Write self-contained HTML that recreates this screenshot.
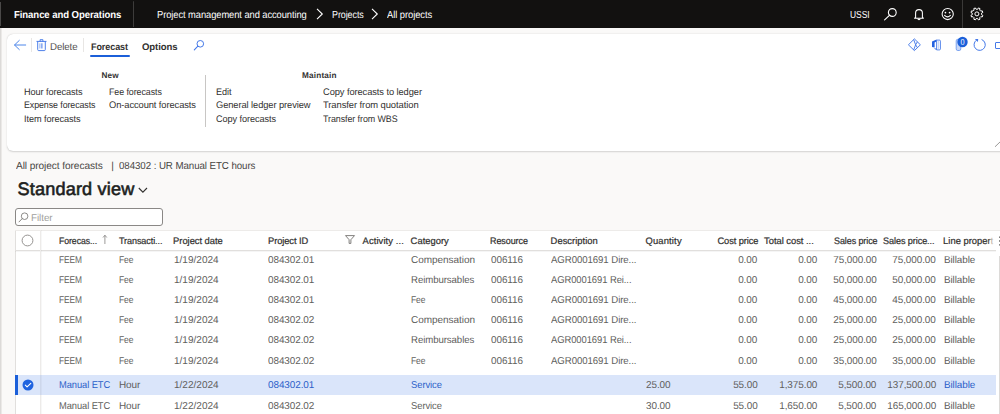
<!DOCTYPE html>
<html><head><meta charset="utf-8">
<style>
*{margin:0;padding:0;box-sizing:border-box}
html,body{width:1000px;height:414px;overflow:hidden;background:#faf9f8;font-family:"Liberation Sans",sans-serif;color:#323130;position:relative}
.a{position:absolute;white-space:nowrap;text-rendering:geometricPrecision}
svg.a{overflow:visible}
</style></head><body>
<div class="a" style="left:0px;top:0px;width:1000px;height:28px;background:#121110"></div>
<div class="a" style="left:0px;top:2px;width:1px;height:24px;background:#4a4948"></div>
<div class="a" style="font-size:10.2px;line-height:16px;top:8px;color:#fff;font-weight:bold;letter-spacing:-0.080px;left:13.70px;transform:scaleX(0.9389);transform-origin:0 0;">Finance and Operations</div>
<div class="a" style="left:133px;top:1px;width:1px;height:25.5px;background:#3d3c3b;border-radius:1px"></div>
<div class="a" style="font-size:10.2px;line-height:16px;top:8px;color:#fff;letter-spacing:-0.080px;left:157.00px;transform:scaleX(0.9169);transform-origin:0 0;">Project management and accounting</div>
<div class="a" style="font-size:10.2px;line-height:16px;top:8px;color:#fff;letter-spacing:-0.080px;left:331.50px;transform:scaleX(0.8770);transform-origin:0 0;">Projects</div>
<div class="a" style="font-size:10.2px;line-height:16px;top:8px;color:#fff;letter-spacing:-0.080px;left:387.00px;transform:scaleX(0.9245);transform-origin:0 0;">All projects</div>
<svg class="a" style="left:315.6px;top:8px" width="8" height="12" viewBox="0 0 8 12"><path d="M1 0.8 L6.3 6 L1 11.2" fill="none" stroke="#fff" stroke-width="1.1"/></svg>
<svg class="a" style="left:371.3px;top:8px" width="8" height="12" viewBox="0 0 8 12"><path d="M1 0.8 L6.3 6 L1 11.2" fill="none" stroke="#fff" stroke-width="1.1"/></svg>
<div class="a" style="font-size:10.2px;line-height:16px;top:8px;color:#fff;letter-spacing:-0.080px;left:850.00px;transform:scaleX(0.8313);transform-origin:0 0;">USSI</div>
<svg class="a" style="left:882px;top:6px" width="16" height="16" viewBox="0 0 16 16"><circle cx="10.3" cy="6.5" r="3.9" fill="none" stroke="#fff" stroke-width="1.1"/><path d="M7.4 9.3 L2.6 13.9" stroke="#fff" stroke-width="1.1" stroke-linecap="round"/></svg>
<svg class="a" style="left:912px;top:7px" width="14" height="15" viewBox="0 0 14 15"><path d="M3.6 10.4 V6 a3.4 3.4 0 0 1 6.8 0 V10.4 L11.4 11.2 H2.6 Z" fill="none" stroke="#fff" stroke-width="1.05" stroke-linejoin="round"/><path d="M5.8 11.8 a1.3 1.3 0 0 0 2.4 0" fill="none" stroke="#fff" stroke-width="1.05"/></svg>
<svg class="a" style="left:940px;top:7px" width="15" height="15" viewBox="0 0 15 15"><circle cx="7.7" cy="7" r="5.6" fill="none" stroke="#fff" stroke-width="1.05"/><circle cx="5.4" cy="5.6" r="0.85" fill="#fff"/><circle cx="9.6" cy="5.6" r="0.85" fill="#fff"/><path d="M4.6 8.4 Q7.5 11.2 10.4 8.4" fill="none" stroke="#fff" stroke-width="1.1" stroke-linecap="round"/></svg>
<div class="a" style="left:962px;top:0px;width:1px;height:28px;background:#3a3938"></div>
<svg class="a" style="left:969px;top:6.4px" width="16" height="16" viewBox="0 0 16 16"><path d="M12.58 8.68 L13.85 9.44 L13.20 11.02 L11.77 10.66 L10.66 11.77 L11.02 13.20 L9.44 13.85 L8.68 12.58 L7.12 12.58 L6.36 13.85 L4.78 13.20 L5.14 11.77 L4.03 10.66 L2.60 11.02 L1.95 9.44 L3.22 8.68 L3.22 7.12 L1.95 6.36 L2.60 4.78 L4.03 5.14 L5.14 4.03 L4.78 2.60 L6.36 1.95 L7.12 3.22 L8.68 3.22 L9.44 1.95 L11.02 2.60 L10.66 4.03 L11.77 5.14 L13.20 4.78 L13.85 6.36 L12.58 7.12 Z" fill="none" stroke="#fff" stroke-width="1" stroke-linejoin="round"/><circle cx="7.9" cy="7.9" r="2" fill="none" stroke="#fff" stroke-width="1"/></svg>
<div class="a" style="left:7px;top:33.5px;width:1010px;height:117.5px;background:#fff;border-radius:6px;box-shadow:0 0.6px 1.8px rgba(0,0,0,.16),0 0 0.5px rgba(0,0,0,.12)"></div>
<svg class="a" style="left:13px;top:39px" width="14" height="12" viewBox="0 0 14 12"><path d="M12.7 6 H1.7 M6.3 1.4 L1.5 6 L6.3 10.6" fill="none" stroke="#4d86ea" stroke-width="1" stroke-linecap="round" stroke-linejoin="round"/></svg>
<div class="a" style="left:31px;top:38px;width:1px;height:14px;background:#e8e6e4"></div>
<svg class="a" style="left:36px;top:38px" width="11" height="14" viewBox="0 0 11 14"><path d="M0.9 3.4 H10.1 M4.1 3.4 V1.7 H6.9 V3.4" fill="none" stroke="#4579e8" stroke-width="0.95" stroke-linecap="round"/><path d="M1.7 3.4 V11.6 Q1.7 12.6 2.7 12.6 H8.3 Q9.3 12.6 9.3 11.6 V3.4" fill="none" stroke="#4579e8" stroke-width="0.95"/><path d="M3.9 5.3 V10.5" stroke="#8fb0f0" stroke-width="1"/><path d="M5.9 5.3 V10.5" stroke="#4579e8" stroke-width="1"/></svg>
<div class="a" style="font-size:10.0px;line-height:16px;top:40px;color:#535150;letter-spacing:-0.080px;left:49.60px;transform:scaleX(0.9684);transform-origin:0 0;">Delete</div>
<div class="a" style="left:83px;top:38px;width:1px;height:14px;background:#e8e6e4"></div>
<div class="a" style="font-size:9.6px;line-height:16px;top:40px;color:#323130;font-weight:bold;letter-spacing:-0.080px;left:91.00px;transform:scaleX(0.9399);transform-origin:0 0;">Forecast</div>
<div class="a" style="left:90px;top:55px;width:39.5px;height:2px;background:#1b5fd9;border-radius:1px"></div>
<div class="a" style="font-size:9.6px;line-height:16px;top:40px;color:#323130;font-weight:bold;letter-spacing:-0.080px;left:141.90px;transform:scaleX(0.9955);transform-origin:0 0;">Options</div>
<svg class="a" style="left:193px;top:39px" width="12" height="12" viewBox="0 0 12 12"><circle cx="7.3" cy="4.8" r="3.3" fill="none" stroke="#4579e8" stroke-width="1"/><path d="M4.9 7.2 L1.3 10.8" stroke="#4579e8" stroke-width="1.1" stroke-linecap="round"/></svg>
<div class="a" style="font-size:8.2px;line-height:16px;top:68px;color:#323130;font-weight:bold;letter-spacing:0.104px;left:101.60px;">New</div>
<div class="a" style="font-size:8.2px;line-height:16px;top:68px;color:#323130;font-weight:bold;letter-spacing:0.193px;left:302.00px;">Maintain</div>
<div class="a" style="left:205px;top:75px;width:1px;height:52px;background:#c8c6c4"></div>
<div class="a" style="font-size:9.5px;line-height:16px;top:85px;color:#323130;letter-spacing:-0.080px;left:24.20px;transform:scaleX(0.9628);transform-origin:0 0;">Hour forecasts</div>
<div class="a" style="font-size:9.5px;line-height:16px;top:98px;color:#323130;letter-spacing:-0.080px;left:24.20px;transform:scaleX(0.9303);transform-origin:0 0;">Expense forecasts</div>
<div class="a" style="font-size:9.5px;line-height:16px;top:112px;color:#323130;letter-spacing:-0.080px;left:24.20px;transform:scaleX(0.9638);transform-origin:0 0;">Item forecasts</div>
<div class="a" style="font-size:9.5px;line-height:16px;top:85px;color:#323130;letter-spacing:-0.080px;left:108.80px;transform:scaleX(0.9345);transform-origin:0 0;">Fee forecasts</div>
<div class="a" style="font-size:9.5px;line-height:16px;top:98px;color:#323130;letter-spacing:-0.080px;left:108.80px;transform:scaleX(0.9800);transform-origin:0 0;">On-account forecasts</div>
<div class="a" style="font-size:9.5px;line-height:16px;top:85px;color:#323130;letter-spacing:-0.080px;left:216.00px;transform:scaleX(0.9601);transform-origin:0 0;">Edit</div>
<div class="a" style="font-size:9.5px;line-height:16px;top:98px;color:#323130;letter-spacing:-0.080px;left:216.00px;transform:scaleX(0.9798);transform-origin:0 0;">General ledger preview</div>
<div class="a" style="font-size:9.5px;line-height:16px;top:112px;color:#323130;letter-spacing:-0.080px;left:216.00px;transform:scaleX(0.9627);transform-origin:0 0;">Copy forecasts</div>
<div class="a" style="font-size:9.5px;line-height:16px;top:85px;color:#323130;letter-spacing:-0.080px;left:323.40px;transform:scaleX(0.9788);transform-origin:0 0;">Copy forecasts to ledger</div>
<div class="a" style="font-size:9.5px;line-height:16px;top:98px;color:#323130;letter-spacing:-0.080px;left:323.40px;transform:scaleX(0.9895);transform-origin:0 0;">Transfer from quotation</div>
<div class="a" style="font-size:9.5px;line-height:16px;top:112px;color:#323130;letter-spacing:-0.080px;left:323.40px;transform:scaleX(0.9365);transform-origin:0 0;">Transfer from WBS</div>
<svg class="a" style="left:904px;top:36px" width="20" height="18" viewBox="904 36 20 18"><path d="M914.4 38.9 L920.4 44.8 L914.4 50.6 L908.4 44.8 Z" fill="none" stroke="#4579e8" stroke-width="0.95" stroke-linejoin="round"/><path d="M913.7 39.6 L915.6 44.8 L913.7 50 M917.4 41.8 L915.6 44.8 L917.4 47.7" fill="none" stroke="#4579e8" stroke-width="0.95"/></svg>
<svg class="a" style="left:928px;top:36px" width="16" height="18" viewBox="928 36 16 18"><path d="M932 41.6 L936.6 39.6 V41.6 L934.6 42.4 V47.6 L932 47.1 Z M933.8 48.4 L936.6 49.9 V48.6 Z" fill="#2563e0"/><path d="M936.6 40.1 H939.4 Q940.4 40.1 940.4 41.1 V48.9 Q940.4 49.9 939.4 49.9 H936.6 Z" fill="none" stroke="#4579e8" stroke-width="0.9"/><path d="M938.3 40.6 V49.4" stroke="#a9c2f3" stroke-width="0.8"/></svg>
<svg class="a" style="left:953px;top:34px" width="16" height="18" viewBox="0 0 16 18"><rect x="3.2" y="5.3" width="4.6" height="11.2" rx="1.6" fill="#c9d8f8" stroke="#6f9bee" stroke-width="0.9"/><circle cx="9.5" cy="8" r="5.2" fill="#1b5fd9"/><text x="9.5" y="11.2" font-family="Liberation Sans" font-size="8.6" fill="#fff" text-anchor="middle" transform="translate(9.5 0) scale(0.85 1) translate(-9.5 0)">0</text></svg>
<svg class="a" style="left:972px;top:37px" width="16" height="16" viewBox="0 0 16 16"><path d="M9.62 2.54 A5.6 5.6 0 1 1 4.6 3.1" fill="none" stroke="#4579e8" stroke-width="1"/><path d="M2.9 2.0 L6.2 2.0 L5.9 5.0 Z" fill="#4579e8"/></svg>
<div class="a" style="left:994.8px;top:42px;width:9px;height:7px;border:1.1px solid #4579e8;border-radius:1px"></div>
<svg class="a" style="left:990px;top:138px" width="10" height="10" viewBox="0 0 10 10"><path d="M11 3 L5 8.8" stroke="#8f8d8b" stroke-width="0.9"/></svg>
<div class="a" style="left:0px;top:28px;width:1px;height:400px;background:#dcdad8"></div>
<div class="a" style="left:1px;top:28px;width:1px;height:400px;background:#ebe9e7"></div>
<div class="a" style="font-size:10.2px;line-height:16px;top:159px;color:#484644;letter-spacing:-0.080px;left:16.20px;transform:scaleX(0.9932);transform-origin:0 0;">All project forecasts</div>
<div class="a" style="font-size:10.2px;line-height:16px;top:159px;color:#484644;left:111.20px;">|</div>
<div class="a" style="font-size:10.2px;line-height:16px;top:159px;color:#484644;letter-spacing:-0.080px;left:118.60px;transform:scaleX(0.9553);transform-origin:0 0;">084302 : UR Manual ETC hours</div>
<div class="a" style="font-size:18.1px;line-height:16px;top:181px;color:#201f1e;letter-spacing:0.162px;-webkit-text-stroke:0.6px #201f1e;left:17.60px;">Standard view</div>
<svg class="a" style="left:138px;top:187px" width="10" height="7" viewBox="0 0 10 7"><path d="M0.8 1 L4.9 5.2 L9 1" fill="none" stroke="#323130" stroke-width="1.1"/></svg>
<div class="a" style="left:15px;top:208px;width:148px;height:18px;border:1px solid #8a8886;border-radius:3px;background:#fff"></div>
<svg class="a" style="left:17.5px;top:210.5px" width="12" height="13" viewBox="0 0 12 13"><circle cx="6.6" cy="5.2" r="3.3" fill="none" stroke="#797775" stroke-width="0.85"/><path d="M4.2 7.6 L1 10.9" stroke="#797775" stroke-width="0.9" stroke-linecap="round"/></svg>
<div class="a" style="font-size:10.0px;line-height:16px;top:211px;color:#a19f9d;letter-spacing:-0.080px;left:31.30px;transform:scaleX(0.9908);transform-origin:0 0;">Filter</div>
<div class="a" style="left:15px;top:230px;width:1000px;height:190px;background:#fff"></div>
<div class="a" style="left:15px;top:230px;width:1px;height:190px;background:#e1dfdd"></div>
<div class="a" style="left:15px;top:230px;width:985px;height:1px;background:#edebe9"></div>
<div class="a" style="left:15px;top:250px;width:981px;height:1px;background:#e1dfdd"></div>
<div class="a" style="left:15px;top:251px;width:981px;height:1px;background:rgba(0,0,0,.04)"></div>
<div class="a" style="left:40px;top:230px;width:1px;height:190px;background:#edebe9"></div>
<div class="a" style="left:41px;top:230px;width:1px;height:190px;background:rgba(0,0,0,.03)"></div>
<div class="a" style="left:998.5px;top:256px;width:1px;height:170px;background:#dcdad8"></div>
<svg class="a" style="left:21px;top:233.5px" width="13" height="13" viewBox="0 0 13 13"><circle cx="6.5" cy="6.5" r="5.4" fill="none" stroke="#8a8886" stroke-width="0.9"/></svg>
<div class="a" style="font-size:9.4px;line-height:16px;top:233px;color:#323130;letter-spacing:-0.080px;-webkit-text-stroke:0.22px #323130;left:59.11px;transform:scaleX(0.9298);transform-origin:0 0;">Forecas...</div>
<div class="a" style="font-size:9.4px;line-height:16px;top:233px;color:#323130;letter-spacing:-0.080px;-webkit-text-stroke:0.22px #323130;left:118.71px;transform:scaleX(0.9626);transform-origin:0 0;">Transacti...</div>
<div class="a" style="font-size:9.4px;line-height:16px;top:233px;color:#323130;letter-spacing:-0.034px;-webkit-text-stroke:0.22px #323130;left:173.11px;">Project date</div>
<div class="a" style="font-size:9.4px;line-height:16px;top:233px;color:#323130;letter-spacing:-0.080px;-webkit-text-stroke:0.22px #323130;left:268.11px;transform:scaleX(0.9934);transform-origin:0 0;">Project ID</div>
<div class="a" style="font-size:9.4px;line-height:16px;top:233px;color:#323130;letter-spacing:0.095px;-webkit-text-stroke:0.22px #323130;left:362.61px;">Activity ...</div>
<div class="a" style="font-size:9.4px;line-height:16px;top:233px;color:#323130;letter-spacing:0.017px;-webkit-text-stroke:0.22px #323130;left:410.61px;">Category</div>
<div class="a" style="font-size:9.4px;line-height:16px;top:233px;color:#323130;letter-spacing:-0.080px;-webkit-text-stroke:0.22px #323130;left:490.41px;transform:scaleX(0.9574);transform-origin:0 0;">Resource</div>
<div class="a" style="font-size:9.4px;line-height:16px;top:233px;color:#323130;letter-spacing:0.028px;-webkit-text-stroke:0.22px #323130;left:550.61px;">Description</div>
<div class="a" style="font-size:9.4px;line-height:16px;top:233px;color:#323130;letter-spacing:0.166px;-webkit-text-stroke:0.22px #323130;left:645.51px;">Quantity</div>
<div class="a" style="font-size:9.4px;line-height:16px;top:233px;color:#323130;letter-spacing:-0.080px;-webkit-text-stroke:0.22px #323130;right:241.95px;transform:scaleX(0.9880);transform-origin:100% 0;">Cost price</div>
<div class="a" style="font-size:9.4px;line-height:16px;top:233px;color:#323130;letter-spacing:-0.028px;-webkit-text-stroke:0.22px #323130;left:764.11px;">Total cost ...</div>
<div class="a" style="font-size:9.4px;line-height:16px;top:233px;color:#323130;letter-spacing:-0.080px;-webkit-text-stroke:0.22px #323130;right:122.35px;transform:scaleX(0.9562);transform-origin:100% 0;">Sales price</div>
<div class="a" style="font-size:9.4px;line-height:16px;top:233px;color:#323130;letter-spacing:-0.080px;-webkit-text-stroke:0.22px #323130;left:883.41px;transform:scaleX(0.9698);transform-origin:0 0;">Sales price...</div>
<div class="a" style="font-size:9.4px;line-height:16px;top:233px;color:#323130;letter-spacing:0.012px;-webkit-text-stroke:0.22px #323130;left:943.11px;">Line propert</div>
<div class="a" style="left:988px;top:234px;width:7px;height:14px;background:linear-gradient(to right,rgba(255,255,255,0),#fff 85%)"></div>
<svg class="a" style="left:101px;top:234px" width="8" height="10" viewBox="0 0 8 10"><path d="M3.9 10 V1.3 M2 3.5 L3.9 1.2 L5.8 3.5" fill="none" stroke="#8a8886" stroke-width="0.85"/></svg>
<svg class="a" style="left:345px;top:235px" width="10" height="9" viewBox="0 0 10 9"><path d="M0.5 0.6 H9.5 L5.9 4.7 V8.4 H4.1 V4.7 Z" fill="none" stroke="#6b6967" stroke-width="0.85" stroke-linejoin="round"/></svg>
<svg class="a" style="left:998px;top:236px" width="4" height="10" viewBox="0 0 4 10"><circle cx="2" cy="1.2" r="0.9" fill="#605e5c"/><circle cx="2" cy="5" r="0.9" fill="#605e5c"/><circle cx="2" cy="8.8" r="0.9" fill="#605e5c"/></svg>
<div class="a" style="left:15px;top:375px;width:980.5px;height:19.6px;background:#dae5fa"></div>
<div class="a" style="left:15px;top:375px;width:2.6px;height:19.6px;background:#1b5fd9"></div>
<div class="a" style="left:40px;top:375px;width:1px;height:19.6px;background:rgba(0,0,0,.06)"></div>
<div class="a" style="left:41px;top:375px;width:1px;height:19.6px;background:rgba(0,0,0,.03)"></div>
<svg class="a" style="left:22px;top:379px" width="12" height="12" viewBox="0 0 12 12"><circle cx="6" cy="6" r="5.5" fill="#1f63e0"/><path d="M3.3 6.1 L5.1 7.8 L8.8 4.3" fill="none" stroke="#fff" stroke-width="1.1" stroke-linecap="round" stroke-linejoin="round"/></svg>
<div class="a" style="font-size:10.0px;line-height:16px;top:253px;color:#605e5c;letter-spacing:-0.080px;left:59.00px;transform:scaleX(0.8345);transform-origin:0 0;">FEEM</div>
<div class="a" style="font-size:10.0px;line-height:16px;top:253px;color:#605e5c;letter-spacing:-0.080px;left:118.60px;transform:scaleX(0.8484);transform-origin:0 0;">Fee</div>
<div class="a" style="font-size:10.0px;line-height:16px;top:253px;color:#605e5c;letter-spacing:0.013px;left:174.00px;">1/19/2024</div>
<div class="a" style="font-size:10.0px;line-height:16px;top:253px;color:#605e5c;letter-spacing:-0.080px;left:268.00px;transform:scaleX(0.9935);transform-origin:0 0;">084302.01</div>
<div class="a" style="font-size:10.0px;line-height:16px;top:253px;color:#605e5c;letter-spacing:-0.045px;left:411.00px;">Compensation</div>
<div class="a" style="font-size:10.0px;line-height:16px;top:253px;color:#605e5c;letter-spacing:-0.080px;left:491.00px;transform:scaleX(0.9922);transform-origin:0 0;">006116</div>
<div class="a" style="font-size:10.0px;line-height:16px;top:253px;color:#605e5c;letter-spacing:-0.080px;left:550.50px;transform:scaleX(0.9640);transform-origin:0 0;">AGR0001691 Dire...</div>
<div class="a" style="font-size:10.0px;line-height:16px;top:253px;color:#605e5c;letter-spacing:-0.080px;right:242.77px;transform:scaleX(0.9922);transform-origin:100% 0;">0.00</div>
<div class="a" style="font-size:10.0px;line-height:16px;top:253px;color:#605e5c;letter-spacing:-0.080px;right:183.07px;transform:scaleX(0.9922);transform-origin:100% 0;">0.00</div>
<div class="a" style="font-size:10.0px;line-height:16px;top:253px;color:#605e5c;letter-spacing:-0.080px;right:123.29px;transform:scaleX(0.9943);transform-origin:100% 0;">75,000.00</div>
<div class="a" style="font-size:10.0px;line-height:16px;top:253px;color:#605e5c;letter-spacing:-0.080px;right:64.09px;transform:scaleX(0.9943);transform-origin:100% 0;">75,000.00</div>
<div class="a" style="font-size:10.0px;line-height:16px;top:253px;color:#605e5c;letter-spacing:-0.080px;left:943.60px;transform:scaleX(0.9877);transform-origin:0 0;">Billable</div>
<div class="a" style="font-size:10.0px;line-height:16px;top:273px;color:#605e5c;letter-spacing:-0.080px;left:59.00px;transform:scaleX(0.8345);transform-origin:0 0;">FEEM</div>
<div class="a" style="font-size:10.0px;line-height:16px;top:273px;color:#605e5c;letter-spacing:-0.080px;left:118.60px;transform:scaleX(0.8484);transform-origin:0 0;">Fee</div>
<div class="a" style="font-size:10.0px;line-height:16px;top:273px;color:#605e5c;letter-spacing:0.013px;left:174.00px;">1/19/2024</div>
<div class="a" style="font-size:10.0px;line-height:16px;top:273px;color:#605e5c;letter-spacing:-0.080px;left:268.00px;transform:scaleX(0.9935);transform-origin:0 0;">084302.01</div>
<div class="a" style="font-size:10.0px;line-height:16px;top:273px;color:#605e5c;letter-spacing:-0.080px;left:411.00px;transform:scaleX(0.9629);transform-origin:0 0;">Reimbursables</div>
<div class="a" style="font-size:10.0px;line-height:16px;top:273px;color:#605e5c;letter-spacing:-0.080px;left:491.00px;transform:scaleX(0.9922);transform-origin:0 0;">006116</div>
<div class="a" style="font-size:10.0px;line-height:16px;top:273px;color:#605e5c;letter-spacing:-0.080px;left:550.50px;transform:scaleX(0.9424);transform-origin:0 0;">AGR0001691 Rei...</div>
<div class="a" style="font-size:10.0px;line-height:16px;top:273px;color:#605e5c;letter-spacing:-0.080px;right:242.77px;transform:scaleX(0.9922);transform-origin:100% 0;">0.00</div>
<div class="a" style="font-size:10.0px;line-height:16px;top:273px;color:#605e5c;letter-spacing:-0.080px;right:183.07px;transform:scaleX(0.9922);transform-origin:100% 0;">0.00</div>
<div class="a" style="font-size:10.0px;line-height:16px;top:273px;color:#605e5c;letter-spacing:-0.080px;right:123.29px;transform:scaleX(0.9943);transform-origin:100% 0;">50,000.00</div>
<div class="a" style="font-size:10.0px;line-height:16px;top:273px;color:#605e5c;letter-spacing:-0.080px;right:64.09px;transform:scaleX(0.9943);transform-origin:100% 0;">50,000.00</div>
<div class="a" style="font-size:10.0px;line-height:16px;top:273px;color:#605e5c;letter-spacing:-0.080px;left:943.60px;transform:scaleX(0.9877);transform-origin:0 0;">Billable</div>
<div class="a" style="font-size:10.0px;line-height:16px;top:293px;color:#605e5c;letter-spacing:-0.080px;left:59.00px;transform:scaleX(0.8345);transform-origin:0 0;">FEEM</div>
<div class="a" style="font-size:10.0px;line-height:16px;top:293px;color:#605e5c;letter-spacing:-0.080px;left:118.60px;transform:scaleX(0.8484);transform-origin:0 0;">Fee</div>
<div class="a" style="font-size:10.0px;line-height:16px;top:293px;color:#605e5c;letter-spacing:0.013px;left:174.00px;">1/19/2024</div>
<div class="a" style="font-size:10.0px;line-height:16px;top:293px;color:#605e5c;letter-spacing:-0.080px;left:268.00px;transform:scaleX(0.9935);transform-origin:0 0;">084302.01</div>
<div class="a" style="font-size:10.0px;line-height:16px;top:293px;color:#605e5c;letter-spacing:-0.080px;left:411.00px;transform:scaleX(0.8484);transform-origin:0 0;">Fee</div>
<div class="a" style="font-size:10.0px;line-height:16px;top:293px;color:#605e5c;letter-spacing:-0.080px;left:491.00px;transform:scaleX(0.9922);transform-origin:0 0;">006116</div>
<div class="a" style="font-size:10.0px;line-height:16px;top:293px;color:#605e5c;letter-spacing:-0.080px;left:550.50px;transform:scaleX(0.9640);transform-origin:0 0;">AGR0001691 Dire...</div>
<div class="a" style="font-size:10.0px;line-height:16px;top:293px;color:#605e5c;letter-spacing:-0.080px;right:242.77px;transform:scaleX(0.9922);transform-origin:100% 0;">0.00</div>
<div class="a" style="font-size:10.0px;line-height:16px;top:293px;color:#605e5c;letter-spacing:-0.080px;right:183.07px;transform:scaleX(0.9922);transform-origin:100% 0;">0.00</div>
<div class="a" style="font-size:10.0px;line-height:16px;top:293px;color:#605e5c;letter-spacing:-0.080px;right:123.29px;transform:scaleX(0.9943);transform-origin:100% 0;">45,000.00</div>
<div class="a" style="font-size:10.0px;line-height:16px;top:293px;color:#605e5c;letter-spacing:-0.080px;right:64.09px;transform:scaleX(0.9943);transform-origin:100% 0;">45,000.00</div>
<div class="a" style="font-size:10.0px;line-height:16px;top:293px;color:#605e5c;letter-spacing:-0.080px;left:943.60px;transform:scaleX(0.9877);transform-origin:0 0;">Billable</div>
<div class="a" style="font-size:10.0px;line-height:16px;top:313px;color:#605e5c;letter-spacing:-0.080px;left:59.00px;transform:scaleX(0.8345);transform-origin:0 0;">FEEM</div>
<div class="a" style="font-size:10.0px;line-height:16px;top:313px;color:#605e5c;letter-spacing:-0.080px;left:118.60px;transform:scaleX(0.8484);transform-origin:0 0;">Fee</div>
<div class="a" style="font-size:10.0px;line-height:16px;top:313px;color:#605e5c;letter-spacing:0.013px;left:174.00px;">1/19/2024</div>
<div class="a" style="font-size:10.0px;line-height:16px;top:313px;color:#605e5c;letter-spacing:-0.080px;left:268.00px;transform:scaleX(0.9935);transform-origin:0 0;">084302.02</div>
<div class="a" style="font-size:10.0px;line-height:16px;top:313px;color:#605e5c;letter-spacing:-0.045px;left:411.00px;">Compensation</div>
<div class="a" style="font-size:10.0px;line-height:16px;top:313px;color:#605e5c;letter-spacing:-0.080px;left:491.00px;transform:scaleX(0.9922);transform-origin:0 0;">006116</div>
<div class="a" style="font-size:10.0px;line-height:16px;top:313px;color:#605e5c;letter-spacing:-0.080px;left:550.50px;transform:scaleX(0.9640);transform-origin:0 0;">AGR0001691 Dire...</div>
<div class="a" style="font-size:10.0px;line-height:16px;top:313px;color:#605e5c;letter-spacing:-0.080px;right:242.77px;transform:scaleX(0.9922);transform-origin:100% 0;">0.00</div>
<div class="a" style="font-size:10.0px;line-height:16px;top:313px;color:#605e5c;letter-spacing:-0.080px;right:183.07px;transform:scaleX(0.9922);transform-origin:100% 0;">0.00</div>
<div class="a" style="font-size:10.0px;line-height:16px;top:313px;color:#605e5c;letter-spacing:-0.080px;right:123.29px;transform:scaleX(0.9943);transform-origin:100% 0;">25,000.00</div>
<div class="a" style="font-size:10.0px;line-height:16px;top:313px;color:#605e5c;letter-spacing:-0.080px;right:64.09px;transform:scaleX(0.9943);transform-origin:100% 0;">25,000.00</div>
<div class="a" style="font-size:10.0px;line-height:16px;top:313px;color:#605e5c;letter-spacing:-0.080px;left:943.60px;transform:scaleX(0.9877);transform-origin:0 0;">Billable</div>
<div class="a" style="font-size:10.0px;line-height:16px;top:333px;color:#605e5c;letter-spacing:-0.080px;left:59.00px;transform:scaleX(0.8345);transform-origin:0 0;">FEEM</div>
<div class="a" style="font-size:10.0px;line-height:16px;top:333px;color:#605e5c;letter-spacing:-0.080px;left:118.60px;transform:scaleX(0.8484);transform-origin:0 0;">Fee</div>
<div class="a" style="font-size:10.0px;line-height:16px;top:333px;color:#605e5c;letter-spacing:0.013px;left:174.00px;">1/19/2024</div>
<div class="a" style="font-size:10.0px;line-height:16px;top:333px;color:#605e5c;letter-spacing:-0.080px;left:268.00px;transform:scaleX(0.9935);transform-origin:0 0;">084302.02</div>
<div class="a" style="font-size:10.0px;line-height:16px;top:333px;color:#605e5c;letter-spacing:-0.080px;left:411.00px;transform:scaleX(0.9629);transform-origin:0 0;">Reimbursables</div>
<div class="a" style="font-size:10.0px;line-height:16px;top:333px;color:#605e5c;letter-spacing:-0.080px;left:491.00px;transform:scaleX(0.9922);transform-origin:0 0;">006116</div>
<div class="a" style="font-size:10.0px;line-height:16px;top:333px;color:#605e5c;letter-spacing:-0.080px;left:550.50px;transform:scaleX(0.9424);transform-origin:0 0;">AGR0001691 Rei...</div>
<div class="a" style="font-size:10.0px;line-height:16px;top:333px;color:#605e5c;letter-spacing:-0.080px;right:242.77px;transform:scaleX(0.9922);transform-origin:100% 0;">0.00</div>
<div class="a" style="font-size:10.0px;line-height:16px;top:333px;color:#605e5c;letter-spacing:-0.080px;right:183.07px;transform:scaleX(0.9922);transform-origin:100% 0;">0.00</div>
<div class="a" style="font-size:10.0px;line-height:16px;top:333px;color:#605e5c;letter-spacing:-0.080px;right:123.29px;transform:scaleX(0.9943);transform-origin:100% 0;">25,000.00</div>
<div class="a" style="font-size:10.0px;line-height:16px;top:333px;color:#605e5c;letter-spacing:-0.080px;right:64.09px;transform:scaleX(0.9943);transform-origin:100% 0;">25,000.00</div>
<div class="a" style="font-size:10.0px;line-height:16px;top:333px;color:#605e5c;letter-spacing:-0.080px;left:943.60px;transform:scaleX(0.9877);transform-origin:0 0;">Billable</div>
<div class="a" style="font-size:10.0px;line-height:16px;top:354px;color:#605e5c;letter-spacing:-0.080px;left:59.00px;transform:scaleX(0.8345);transform-origin:0 0;">FEEM</div>
<div class="a" style="font-size:10.0px;line-height:16px;top:354px;color:#605e5c;letter-spacing:-0.080px;left:118.60px;transform:scaleX(0.8484);transform-origin:0 0;">Fee</div>
<div class="a" style="font-size:10.0px;line-height:16px;top:354px;color:#605e5c;letter-spacing:0.013px;left:174.00px;">1/19/2024</div>
<div class="a" style="font-size:10.0px;line-height:16px;top:354px;color:#605e5c;letter-spacing:-0.080px;left:268.00px;transform:scaleX(0.9935);transform-origin:0 0;">084302.02</div>
<div class="a" style="font-size:10.0px;line-height:16px;top:354px;color:#605e5c;letter-spacing:-0.080px;left:411.00px;transform:scaleX(0.8484);transform-origin:0 0;">Fee</div>
<div class="a" style="font-size:10.0px;line-height:16px;top:354px;color:#605e5c;letter-spacing:-0.080px;left:491.00px;transform:scaleX(0.9922);transform-origin:0 0;">006116</div>
<div class="a" style="font-size:10.0px;line-height:16px;top:354px;color:#605e5c;letter-spacing:-0.080px;left:550.50px;transform:scaleX(0.9640);transform-origin:0 0;">AGR0001691 Dire...</div>
<div class="a" style="font-size:10.0px;line-height:16px;top:354px;color:#605e5c;letter-spacing:-0.080px;right:242.77px;transform:scaleX(0.9922);transform-origin:100% 0;">0.00</div>
<div class="a" style="font-size:10.0px;line-height:16px;top:354px;color:#605e5c;letter-spacing:-0.080px;right:183.07px;transform:scaleX(0.9922);transform-origin:100% 0;">0.00</div>
<div class="a" style="font-size:10.0px;line-height:16px;top:354px;color:#605e5c;letter-spacing:-0.080px;right:123.29px;transform:scaleX(0.9943);transform-origin:100% 0;">35,000.00</div>
<div class="a" style="font-size:10.0px;line-height:16px;top:354px;color:#605e5c;letter-spacing:-0.080px;right:64.09px;transform:scaleX(0.9943);transform-origin:100% 0;">35,000.00</div>
<div class="a" style="font-size:10.0px;line-height:16px;top:354px;color:#605e5c;letter-spacing:-0.080px;left:943.60px;transform:scaleX(0.9877);transform-origin:0 0;">Billable</div>
<div class="a" style="font-size:10.0px;line-height:16px;top:378px;color:#2b5fc9;letter-spacing:-0.080px;left:59.00px;transform:scaleX(0.9329);transform-origin:0 0;">Manual ETC</div>
<div class="a" style="font-size:10.0px;line-height:16px;top:378px;color:#605e5c;letter-spacing:-0.080px;left:118.60px;transform:scaleX(0.9972);transform-origin:0 0;">Hour</div>
<div class="a" style="font-size:10.0px;line-height:16px;top:378px;color:#605e5c;letter-spacing:0.013px;left:174.00px;">1/22/2024</div>
<div class="a" style="font-size:10.0px;line-height:16px;top:378px;color:#2b5fc9;letter-spacing:-0.080px;left:268.00px;transform:scaleX(0.9935);transform-origin:0 0;">084302.01</div>
<div class="a" style="font-size:10.0px;line-height:16px;top:378px;color:#2b5fc9;letter-spacing:-0.080px;left:411.00px;transform:scaleX(0.9431);transform-origin:0 0;">Service</div>
<div class="a" style="font-size:10.0px;line-height:16px;top:378px;color:#605e5c;letter-spacing:-0.080px;left:645.60px;transform:scaleX(0.9927);transform-origin:0 0;">25.00</div>
<div class="a" style="font-size:10.0px;line-height:16px;top:378px;color:#605e5c;letter-spacing:-0.080px;right:242.80px;transform:scaleX(0.9927);transform-origin:100% 0;">55.00</div>
<div class="a" style="font-size:10.0px;line-height:16px;top:378px;color:#605e5c;letter-spacing:-0.080px;right:183.10px;transform:scaleX(0.9943);transform-origin:100% 0;">1,375.00</div>
<div class="a" style="font-size:10.0px;line-height:16px;top:378px;color:#605e5c;letter-spacing:-0.080px;right:123.30px;transform:scaleX(0.9943);transform-origin:100% 0;">5,500.00</div>
<div class="a" style="font-size:10.0px;line-height:16px;top:378px;color:#605e5c;letter-spacing:-0.080px;right:64.08px;transform:scaleX(0.9943);transform-origin:100% 0;">137,500.00</div>
<div class="a" style="font-size:10.0px;line-height:16px;top:378px;color:#2b5fc9;letter-spacing:-0.080px;left:943.60px;transform:scaleX(0.9877);transform-origin:0 0;">Billable</div>
<div class="a" style="font-size:10.0px;line-height:16px;top:399px;color:#605e5c;letter-spacing:-0.080px;left:59.00px;transform:scaleX(0.9329);transform-origin:0 0;">Manual ETC</div>
<div class="a" style="font-size:10.0px;line-height:16px;top:399px;color:#605e5c;letter-spacing:-0.080px;left:118.60px;transform:scaleX(0.9972);transform-origin:0 0;">Hour</div>
<div class="a" style="font-size:10.0px;line-height:16px;top:399px;color:#605e5c;letter-spacing:0.013px;left:174.00px;">1/22/2024</div>
<div class="a" style="font-size:10.0px;line-height:16px;top:399px;color:#605e5c;letter-spacing:-0.080px;left:268.00px;transform:scaleX(0.9935);transform-origin:0 0;">084302.02</div>
<div class="a" style="font-size:10.0px;line-height:16px;top:399px;color:#605e5c;letter-spacing:-0.080px;left:411.00px;transform:scaleX(0.9431);transform-origin:0 0;">Service</div>
<div class="a" style="font-size:10.0px;line-height:16px;top:399px;color:#605e5c;letter-spacing:-0.080px;left:645.60px;transform:scaleX(0.9927);transform-origin:0 0;">30.00</div>
<div class="a" style="font-size:10.0px;line-height:16px;top:399px;color:#605e5c;letter-spacing:-0.080px;right:242.80px;transform:scaleX(0.9927);transform-origin:100% 0;">55.00</div>
<div class="a" style="font-size:10.0px;line-height:16px;top:399px;color:#605e5c;letter-spacing:-0.080px;right:183.10px;transform:scaleX(0.9943);transform-origin:100% 0;">1,650.00</div>
<div class="a" style="font-size:10.0px;line-height:16px;top:399px;color:#605e5c;letter-spacing:-0.080px;right:123.30px;transform:scaleX(0.9943);transform-origin:100% 0;">5,500.00</div>
<div class="a" style="font-size:10.0px;line-height:16px;top:399px;color:#605e5c;letter-spacing:-0.080px;right:64.08px;transform:scaleX(0.9943);transform-origin:100% 0;">165,000.00</div>
<div class="a" style="font-size:10.0px;line-height:16px;top:399px;color:#605e5c;letter-spacing:-0.080px;left:943.60px;transform:scaleX(0.9877);transform-origin:0 0;">Billable</div>
</body></html>
